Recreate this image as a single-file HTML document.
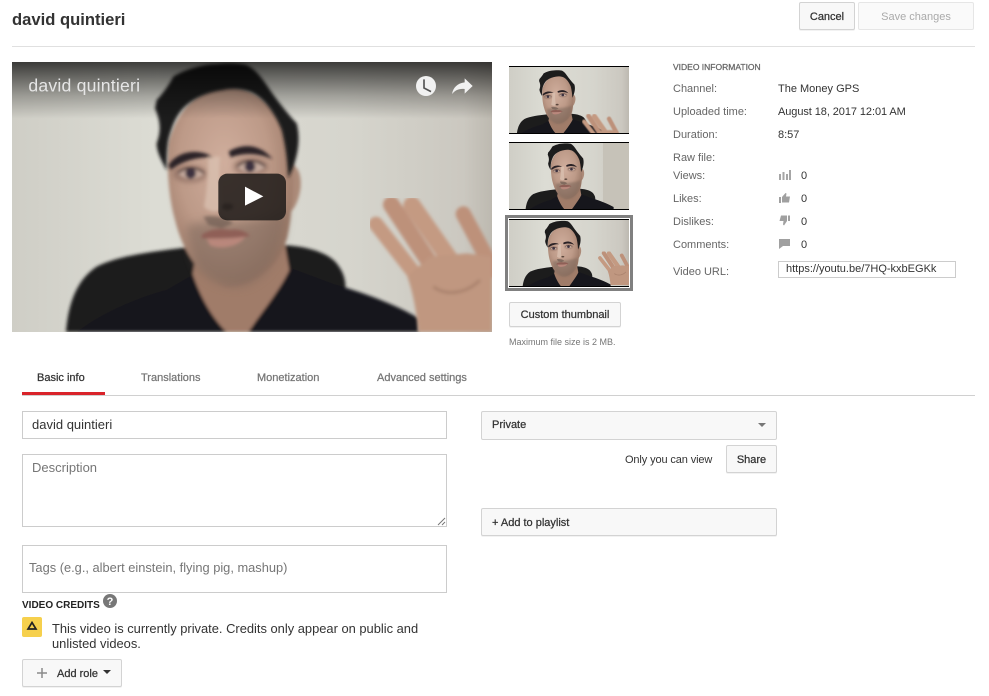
<!DOCTYPE html>
<html><head><meta charset="utf-8">
<style>
html,body{margin:0;padding:0;background:#fff;width:989px;height:696px;overflow:hidden}
body{position:relative;font-family:"Liberation Sans",sans-serif;color:#333}
.t{position:absolute;white-space:nowrap;font-size:12px;line-height:14px}
.m{-webkit-text-stroke:.25px currentColor}
.b{position:absolute;box-sizing:border-box;background:#f8f8f8;border:1px solid #d3d3d3;border-radius:2px;box-shadow:0 1px 0 rgba(0,0,0,.05)}
.i{position:absolute;box-sizing:border-box;background:#fff;border:1px solid #ccc}
svg{position:absolute;display:block}
.l{color:#666}
</style></head><body>
<svg width="0" height="0" style="position:absolute">
<defs>
<filter id="bl" x="-5%" y="-5%" width="110%" height="110%"><feGaussianBlur stdDeviation="4.500"/></filter>
<filter id="bs" x="-20%" y="-20%" width="140%" height="140%"><feGaussianBlur stdDeviation="14"/></filter>
<filter id="bm" x="-30%" y="-30%" width="160%" height="160%"><feGaussianBlur stdDeviation="8"/></filter>
<linearGradient id="wall" x1="0" x2="1" y1="0" y2="0"><stop offset="0" stop-color="#cfcec6"/><stop offset=".3" stop-color="#dcdcd4"/><stop offset=".7" stop-color="#d6d5cd"/><stop offset=".94" stop-color="#cbc8c0"/><stop offset="1" stop-color="#bdb9b0"/></linearGradient>
<linearGradient id="top" x1="0" x2="0" y1="0" y2="1"><stop offset="0" stop-color="#000" stop-opacity=".72"/><stop offset=".6" stop-color="#000" stop-opacity=".25"/><stop offset="1" stop-color="#000" stop-opacity="0"/></linearGradient>
<radialGradient id="skin" cx=".45" cy=".38" r=".65"><stop offset="0" stop-color="#d0ae9d"/><stop offset=".55" stop-color="#bd9a88"/><stop offset="1" stop-color="#957361"/></radialGradient>
<g id="person">
<g filter="url(#bl)">
<path d="M198 846C205 760 230 690 290 650C360 615 460 605 560 592L850 585C930 590 985 610 1010 640C1030 665 1038 690 1036 720L1100 846Z" fill="#1c1b1e"/>
<path d="M232 846C300 790 420 740 500 720L590 668L860 650L1000 702C1100 730 1200 770 1256 805V846Z" fill="#17161b"/>
<path d="M578 672C600 740 640 810 680 846H745C790 780 840 720 868 660L850 560H600Z" fill="#a07c69"/>
<path d="M860 350C880 335 905 355 902 410C898 450 880 490 860 490Z" fill="#ab8a78"/>
<path d="M505 280C500 350 505 440 525 510C545 590 590 680 680 712C770 705 840 640 862 560C880 480 885 350 870 270C840 170 760 110 680 110C600 110 530 180 505 280Z" fill="url(#skin)"/>
</g>
<path d="M560 530C600 510 640 515 690 520C760 505 820 505 860 480C855 580 825 670 740 705C690 720 630 700 590 650C575 620 565 570 560 530Z" fill="#7d685b" opacity=".55" filter="url(#bs)"/>
<g filter="url(#bm)">
<ellipse cx="570" cy="372" rx="52" ry="26" fill="#8c6c60" opacity=".7"/>
<ellipse cx="752" cy="350" rx="52" ry="26" fill="#8c6c60" opacity=".7"/>
</g>
<g filter="url(#bl)">
<path d="M625 320C625 370 620 430 612 470C630 490 660 490 665 470C660 420 655 370 660 320Z" fill="#dcc3b3" opacity=".7"/>
<path d="M500 362C490 340 470 310 470 280C485 240 480 210 465 175L470 150C490 130 510 100 520 80C550 60 610 42 650 42C690 38 720 40 740 45C770 60 790 90 810 120C830 150 870 200 890 220C900 260 897 300 880 350L865 385C862 340 860 300 845 240C825 190 790 140 750 125C720 115 690 115 670 120C630 125 590 140 560 165C530 190 515 230 505 270C500 300 500 335 500 362Z" fill="#1e1a1d"/>
<path d="M506 345C525 315 570 295 620 312L640 322C600 320 550 330 512 360Z" fill="#2b2225"/>
<path d="M686 305C725 280 780 280 818 328C780 310 735 306 692 322Z" fill="#2b2225"/>
<path d="M535 372C555 352 590 352 612 372C590 392 555 392 535 372Z" fill="#c4a99c"/>
<path d="M712 352C735 330 770 330 795 352C770 374 735 374 712 352Z" fill="#c4a99c"/>
<circle cx="572" cy="370" r="16" fill="#3d3340"/>
<circle cx="750" cy="350" r="16" fill="#3d3340"/>
<path d="M535 370C555 350 590 350 612 370" fill="none" stroke="#3a2c2c" stroke-width="5"/>
<path d="M712 350C735 328 770 328 795 350" fill="none" stroke="#3a2c2c" stroke-width="5"/>
<path d="M605 555C630 535 665 535 690 540C715 535 740 545 750 558C715 565 650 565 605 565Z" fill="#8f5f56"/>
<path d="M620 566C660 566 700 566 735 560C720 590 660 600 630 586Z" fill="#b9877c"/>
<path d="M610 500C640 495 680 500 700 520L665 535L625 525Z" fill="#6e5c52" opacity=".7"/>
<ellipse cx="682" cy="470" rx="18" ry="10" fill="#5b463d"/>
</g>
</g>
<g id="hand" filter="url(#bl)">
<path d="M1128 522L1255 685" fill="none" stroke="#c49a82" stroke-width="44" stroke-linecap="round"/>
<path d="M1174 464L1310 670" fill="none" stroke="#bd917a" stroke-width="50" stroke-linecap="round"/>
<path d="M1236 466L1375 665" fill="none" stroke="#c49a82" stroke-width="52" stroke-linecap="round"/>
<path d="M1390 492L1480 660" fill="none" stroke="#bd917a" stroke-width="46" stroke-linecap="round"/>
<path d="M1222 680L1290 620L1400 610L1476 620V846H1255C1250 790 1240 730 1222 680Z" fill="#c09780"/>
<path d="M1300 710C1340 740 1400 730 1440 690" fill="none" stroke="#a47c67" stroke-width="10" opacity=".7"/>
</g>
</defs>
</svg>

<div class="t" style="left:12px;top:9px;font-size:16.600px;line-height:22px;font-weight:bold;color:#333">david quintieri</div>
<div class="b m" style="left:799px;top:2px;width:56px;height:28px;text-align:center;line-height:28px;font-size:11px;color:#333">Cancel</div>
<div class="b" style="left:858px;top:2px;width:116px;height:28px;text-align:center;line-height:28px;font-size:11px;color:#aaa;background:#fafafa;border-color:#e6e6e6;box-shadow:none">Save changes</div>
<div style="position:absolute;left:12px;top:46px;width:963px;height:1px;background:#e0e0e0"></div>

<svg style="left:12px;top:62px" width="480" height="270" viewBox="36 36 1440 810">
<rect x="36" y="36" width="1440" height="810" fill="url(#wall)"/>
<use href="#person"/>
<use href="#hand"/>
<rect x="36" y="36" width="1440" height="170" fill="url(#top)"/>
<rect x="655" y="371" width="203" height="140" rx="27" fill="#231f1c" fill-opacity=".88"/>
<path d="M735 410L790 439L735 467Z" fill="#fff"/>
<circle cx="1278" cy="108" r="30" fill="#f1f1f1"/>
<path d="M1272 88V114L1293 125" fill="none" stroke="#555" stroke-width="5"/>
<path d="M1394 85L1418 108L1394 131V117C1378 115 1366 120 1356 132C1360 112 1372 100 1394 97Z" fill="#f1f1f1"/>
<text x="85" y="125" font-family="Liberation Sans" font-size="53" fill="#e6e6e6" textLength="335">david quintieri</text>
</svg>

<svg style="left:509px;top:66px" width="120" height="68" viewBox="0 0 120 68">
<rect width="120" height="68" fill="url(#wall)"/>
<g transform="translate(-8.700 1) scale(.0833 .08)"><use href="#person"/></g>
<g transform="translate(-32 6) scale(.095)"><use href="#hand"/></g>
<rect width="120" height="1" fill="#000"/><rect y="67" width="120" height="1" fill="#000"/>
</svg>
<svg style="left:509px;top:142px" width="120" height="68" viewBox="0 0 120 68">
<rect width="120" height="68" fill="url(#wall)"/>
<rect x="94" width="26" height="68" fill="#c6c2b8"/>
<g transform="translate(0 -2) scale(.0833)"><use href="#person"/></g>
<rect width="120" height="1" fill="#000"/><rect y="67" width="120" height="1" fill="#000"/>
</svg>
<div style="position:absolute;left:505px;top:215px;width:128px;height:76px;box-sizing:border-box;border:3px solid #808080;background:#fff"></div>
<svg style="left:509px;top:219px" width="120" height="68" viewBox="0 0 120 68">
<rect width="120" height="68" fill="url(#wall)"/>
<g transform="translate(-3 -1.500) scale(.0833)"><use href="#person"/></g>
<g transform="translate(-3 -4.500) scale(.0833)"><use href="#hand"/></g>
<rect width="120" height="1" fill="#000"/><rect y="67" width="120" height="1" fill="#000"/>
</svg>

<div class="b m" style="left:509px;top:302px;width:112px;height:25px;text-align:center;line-height:24px;font-size:11px;color:#333">Custom thumbnail</div>
<div class="t l" style="left:509px;top:336px;font-size:9px;line-height:12px;color:#767676">Maximum file size is 2 MB.</div>

<div class="t m" style="left:673px;top:62px;font-size:8.500px;line-height:10px;color:#666">VIDEO INFORMATION</div>
<div class="t l" style="left:673px;top:82px;font-size:11px">Channel:</div>
<div class="t" style="left:778px;top:82px;font-size:11px">The Money GPS</div>
<div class="t l" style="left:673px;top:105px;font-size:11px">Uploaded time:</div>
<div class="t" style="left:778px;top:105px;font-size:11px;letter-spacing:-.08px">August 18, 2017 12:01 AM</div>
<div class="t l" style="left:673px;top:128px;font-size:11px">Duration:</div>
<div class="t" style="left:778px;top:128px;font-size:11px">8:57</div>
<div class="t l" style="left:673px;top:151px;font-size:11px">Raw file:</div>
<div class="t l" style="left:673px;top:169px;font-size:11px">Views:</div>
<div class="t l" style="left:673px;top:192px;font-size:11px">Likes:</div>
<div class="t l" style="left:673px;top:215px;font-size:11px">Dislikes:</div>
<div class="t l" style="left:673px;top:238px;font-size:11px">Comments:</div>
<div class="t l" style="left:673px;top:265px;font-size:11px">Video URL:</div>
<div class="t" style="left:801px;top:169px;font-size:11px">0</div>
<div class="t" style="left:801px;top:192px;font-size:11px">0</div>
<div class="t" style="left:801px;top:215px;font-size:11px">0</div>
<div class="t" style="left:801px;top:238px;font-size:11px">0</div>
<svg style="left:778px;top:169px" width="14" height="11" viewBox="0 0 14 11"><path d="M1 5h2v6H1zM4.500 3h2v8h-2zM8 5h2v6H8zM11 1h2v10h-2z" fill="#a6a6a6"/></svg>
<svg style="left:778px;top:192px" width="13" height="11" viewBox="0 0 13 11"><path d="M1 5h2v6H1zM4 5L7.500 1 8.500 1.500 8 4.500H12L11 10.500H4z" fill="#a0a0a0"/></svg>
<svg style="left:778px;top:215px" width="13" height="11" viewBox="0 0 13 11"><path d="M10 0.500h2v5.500h-2zM9 0.500H3L1.500 6H5.500L5 9.500 6 10.500 9 6z" fill="#a0a0a0"/></svg>
<svg style="left:778px;top:238px" width="13" height="11" viewBox="0 0 13 11"><path d="M1 1h11v7H5L1 11z" fill="#a0a0a0"/></svg>
<div class="i" style="left:778px;top:261px;width:178px;height:17px;font-size:11px;line-height:15px;padding-left:7px;color:#333">https://youtu.be/7HQ-kxbEGKk</div>

<div class="t m" style="left:37px;top:371px;font-size:11px;color:#333">Basic info</div>
<div class="t m" style="left:141px;top:371px;font-size:11px;color:#767676">Translations</div>
<div class="t m" style="left:257px;top:371px;font-size:11px;color:#767676">Monetization</div>
<div class="t m" style="left:377px;top:371px;font-size:11px;color:#767676">Advanced settings</div>
<div style="position:absolute;left:22px;top:395px;width:953px;height:1px;background:#d0d0d0"></div>
<div style="position:absolute;left:22px;top:392px;width:83px;height:3px;background:#d9232a"></div>

<div class="i" style="left:22px;top:411px;width:425px;height:28px;padding-left:9px;font-size:13px;line-height:25px;color:#333">david quintieri</div>
<div class="i" style="left:22px;top:454px;width:425px;height:73px;padding:5px 9px;font-size:13px;line-height:15px;color:#767676">Description</div>
<svg style="left:437px;top:517px" width="9" height="9" viewBox="0 0 9 9"><path d="M1 8L8 1M5 8L8 5" stroke="#777" stroke-width="1"/></svg>
<div class="i" style="left:22px;top:545px;width:425px;height:48px;padding-left:6px;font-size:12.850px;line-height:44px;color:#767676">Tags (e.g., albert einstein, flying pig, mashup)</div>

<div class="t" style="left:22px;top:599px;font-size:10px;font-weight:bold;color:#222">VIDEO CREDITS</div>
<svg style="left:103px;top:594px" width="14" height="14" viewBox="0 0 14 14"><circle cx="7" cy="7" r="7" fill="#777"/><text x="7" y="11" font-family="Liberation Sans" font-size="11" font-weight="bold" fill="#fff" text-anchor="middle">?</text></svg>
<div style="position:absolute;left:22px;top:617px;width:20px;height:20px;border-radius:2px;background:#f6d04d"></div>
<svg style="left:26px;top:621px" width="12" height="10" viewBox="0 0 12 10"><path d="M6 1.500L10 8H2Z" fill="none" stroke="#222" stroke-width="1.700"/></svg>
<div class="t" style="left:52px;top:621px;font-size:12.900px;line-height:15px;color:#333;white-space:normal;width:385px">This video is currently private. Credits only appear on public and<br>unlisted videos.</div>
<div class="b" style="left:22px;top:659px;width:100px;height:28px"></div>
<svg style="left:36px;top:667px" width="12" height="12" viewBox="0 0 12 12"><path d="M6 1V11M1 6H11" stroke="#8a8a8a" stroke-width="1.500"/></svg>
<div class="t m" style="left:57px;top:667px;font-size:11px;color:#333">Add role</div>
<svg style="left:103px;top:670px" width="8" height="4" viewBox="0 0 8 4"><path d="M0 0H8L4 4Z" fill="#333"/></svg>

<div class="b m" style="left:481px;top:411px;width:296px;height:29px;padding-left:10px;font-size:11px;line-height:26px;color:#333;box-shadow:none">Private</div>
<svg style="left:758px;top:423px" width="8" height="4" viewBox="0 0 8 4"><path d="M0 0H8L4 4Z" fill="#777"/></svg>
<div class="t" style="left:625px;top:453px;font-size:11px;letter-spacing:-.12px;color:#333">Only you can view</div>
<div class="b m" style="left:726px;top:445px;width:51px;height:28px;text-align:center;line-height:28px;font-size:11px;color:#333">Share</div>
<div class="b m" style="left:481px;top:508px;width:296px;height:28px;padding-left:10px;font-size:11px;line-height:28px;color:#333">+ Add to playlist</div>
</body></html>
